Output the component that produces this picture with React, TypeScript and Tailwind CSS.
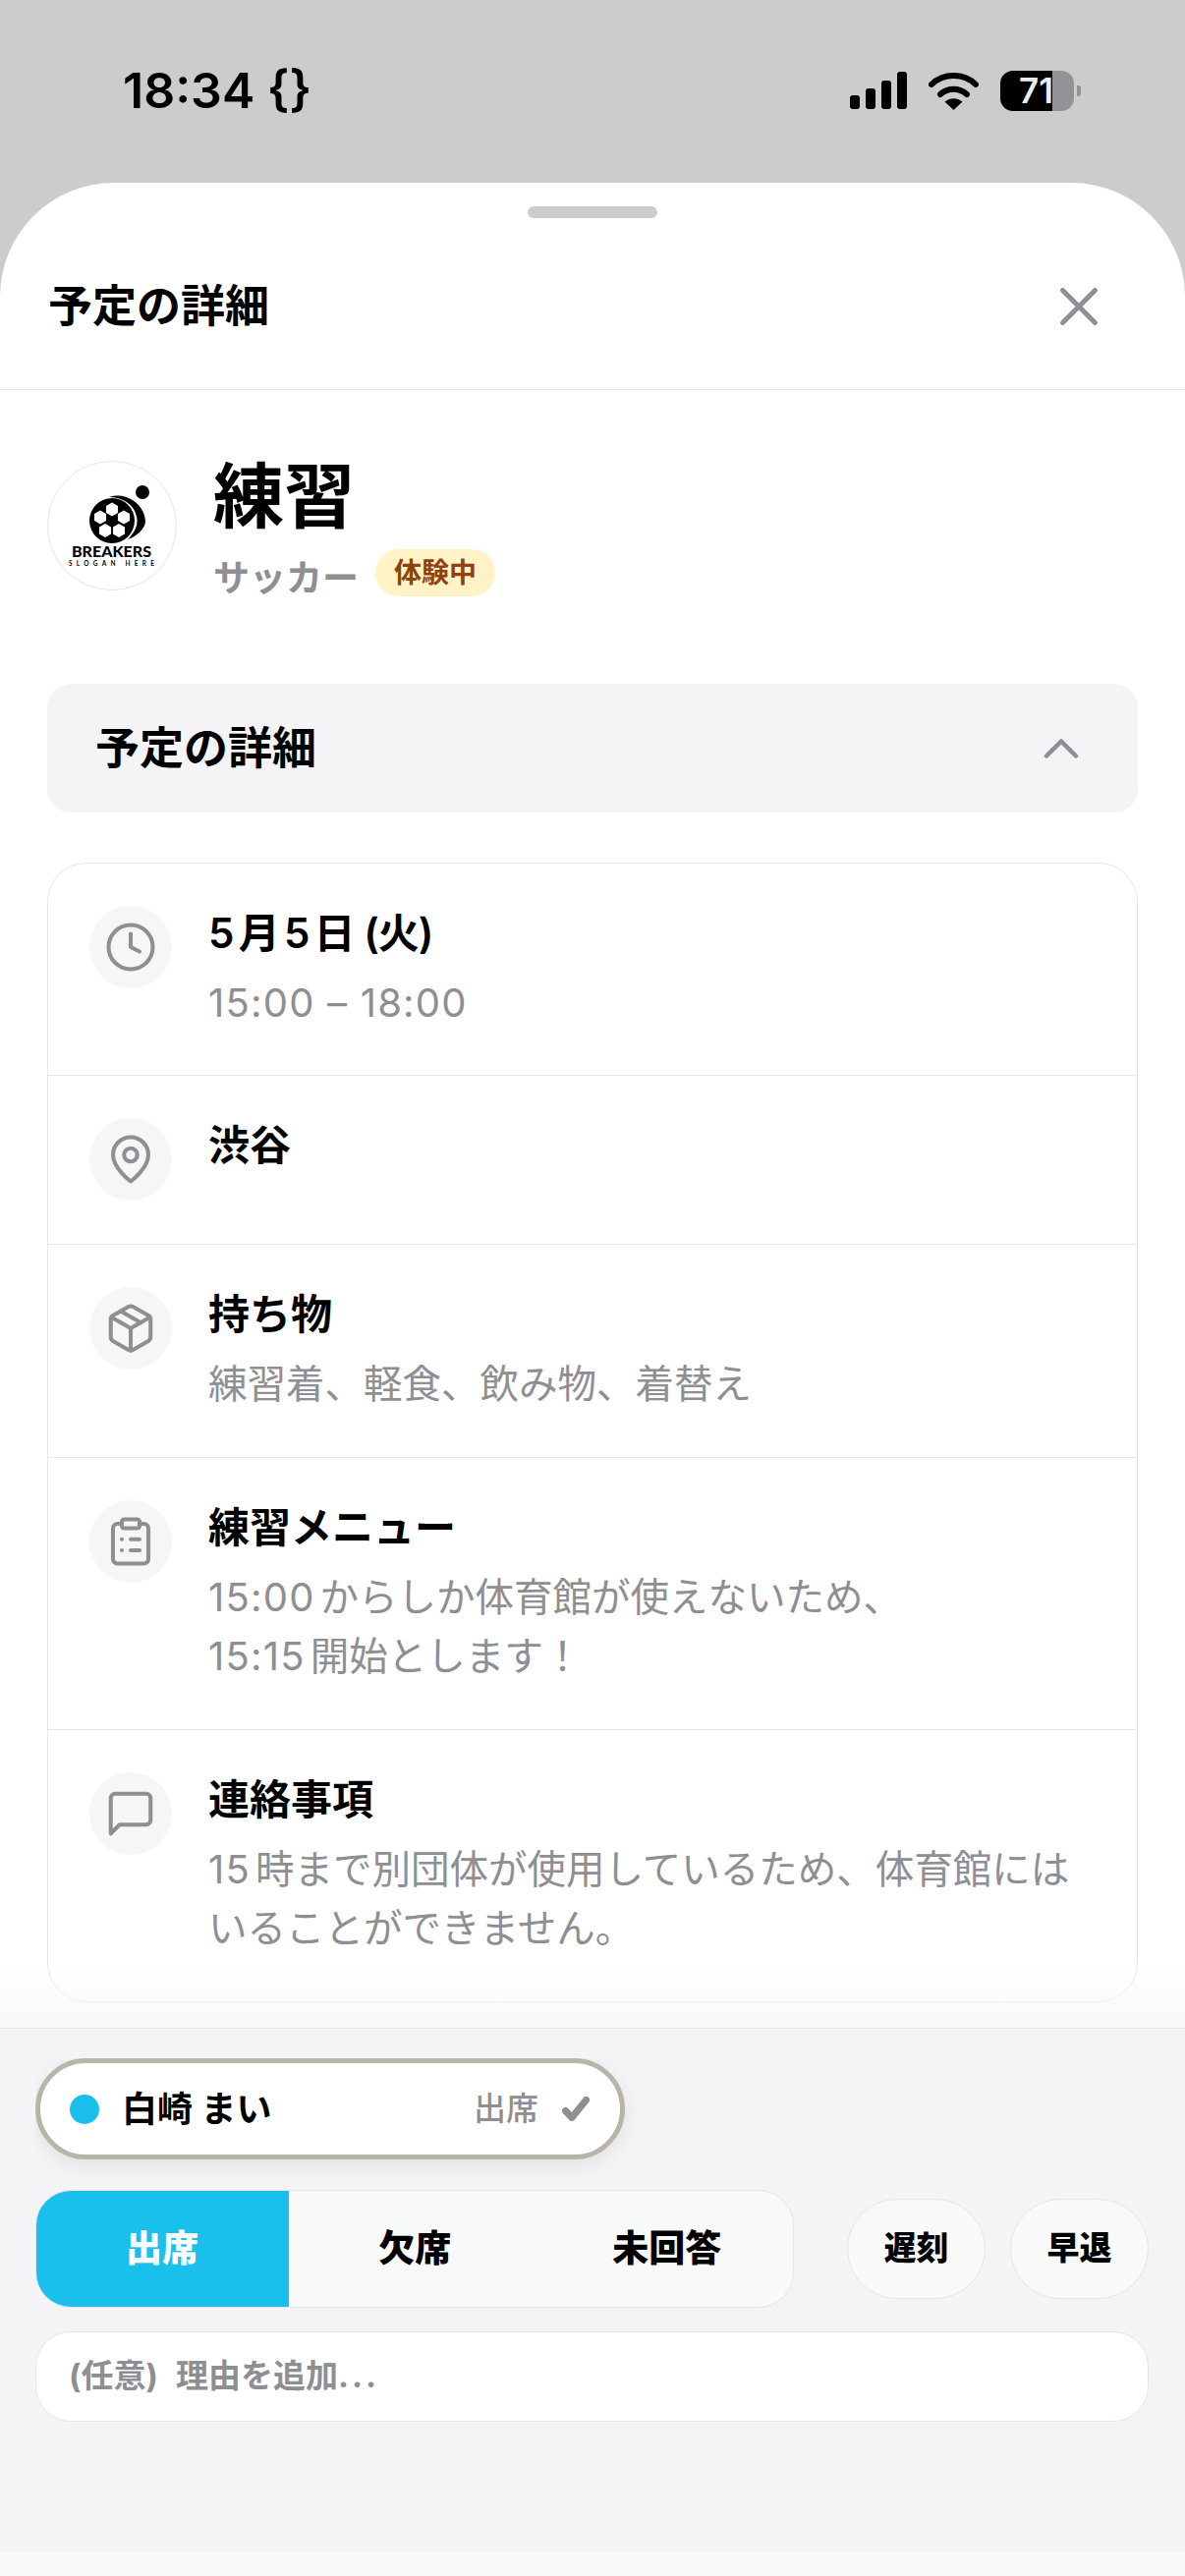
import { ChevronUp, Clock, ClipboardList, Package, X } from "lucide-react";
import type { ReactNode } from "react";

const GRAY = "#8e8e93";

const PinIcon = () => (
  <svg width={54} height={54} viewBox="0 0 24 24" fill="none" stroke={GRAY} strokeWidth={1.8} strokeLinejoin="round">
    <path d="M20 10c0 6-8 12-8 12s-8-6-8-12a8 8 0 0 1 16 0Z" />
    <circle cx={12} cy={10} r={3} />
  </svg>
);

const ChatIcon = () => (
  <svg width={54} height={54} viewBox="0 0 24 24" fill="none" stroke={GRAY} strokeWidth={1.8} strokeLinejoin="round">
    <path d="M21 15a2 2 0 0 1-2 2H7l-4 4V5a2 2 0 0 1 2-2h14a2 2 0 0 1 2 2z" />
  </svg>
);

const SignalBars = () => (
  <div className="flex items-end gap-[6px] h-[38px]">
    <div className="w-[10px] h-[14px] rounded-[3px] bg-black" />
    <div className="w-[10px] h-[21px] rounded-[3px] bg-black" />
    <div className="w-[10px] h-[29px] rounded-[3px] bg-black" />
    <div className="w-[10px] h-[38px] rounded-[3px] bg-black" />
  </div>
);

const WifiIcon = () => (
  <svg width={51} height={39} viewBox="0 0 51 39" fill="none">
    <path d="M3 13C15 1 36 1 48 13" stroke="#000" strokeWidth={6} strokeLinecap="round" />
    <path d="M12 23C20 16 31 16 39 23" stroke="#000" strokeWidth={6} strokeLinecap="round" />
    <path d="M25.5 39L16.5 30.5C22 26 29 26 34.5 30.5Z" fill="#000" />
  </svg>
);

const Battery = () => (
  <div className="flex items-center gap-[3px]">
    <div className="relative flex w-[75px] h-[41px] rounded-[13px] overflow-hidden">
      <div className="w-[53px] bg-black" />
      <div className="flex-1 bg-[#939397]" />
      <span className="absolute left-[19px] top-0 leading-[41px] text-[35px] font-semibold text-[#ececec]">71</span>
    </div>
    <div className="w-[4px] h-[11px] rounded-r-[3px] bg-[#939397]" />
  </div>
);

// white patches of the ball, around the black centre pentagon
const PATCHES = [
  [65, 48.5],
  [53, 56.5],
  [77, 56.5],
  [58, 70],
  [72, 70],
];

const hexPoints = (cx: number, cy: number, r: number) =>
  [0, 1, 2, 3, 4, 5]
    .map((i) => {
      const a = (Math.PI / 3) * i + Math.PI / 6;
      return `${cx + r * Math.cos(a)},${cy + r * Math.sin(a)}`;
    })
    .join(" ");

const TeamLogo = () => (
  <div className="w-[132px] h-[132px] shrink-0 rounded-full border border-[#e5e5ea] bg-white overflow-hidden">
    <svg width={130} height={130} viewBox="0 0 130 130">
      <circle cx={96} cy={31} r={7} fill="#000" />
      <path d="M62 36C80 30 98 44 99 60C99 68 90 76 81 79C88 72 92 64 90 56C88 44 76 36 62 36Z" fill="#000" />
      <circle cx={65} cy={60} r={23} fill="#000" />
      <clipPath id="ball-clip">
        <circle cx={65} cy={60} r={20} />
      </clipPath>
      <g clipPath="url(#ball-clip)">
        {PATCHES.map(([x, y]) => (
          <polygon key={`${x}-${y}`} points={hexPoints(x, y, 7)} fill="#fff" />
        ))}
      </g>
      <text x={24} y={97} textLength={81} lengthAdjust="spacingAndGlyphs" fontFamily="Lato, sans-serif" fontWeight={900} fontSize={15} fill="#000">
        BREAKERS
      </text>
      <text x={21} y={106} textLength={87} fontFamily="Lato, sans-serif" fontWeight={700} fontSize={6.5} fill="#000">
        SLOGAN HERE
      </text>
    </svg>
  </div>
);

// digits run a little wider than the CJK text around them
const Num = ({ children }: { children: ReactNode }) => <span className="text-[40px] tracking-[1.2px]">{children}</span>;

interface DetailRowProps {
  icon: ReactNode;
  title: ReactNode;
  lines?: ReactNode[];
  divider?: boolean;
}

const DetailRow = ({ icon, title, lines = [], divider = true }: DetailRowProps) => (
  <div className={`flex gap-[37px] pl-[42px] pt-[43px] ${divider ? "pb-[44px] border-t border-[#e5e5ea]" : "pb-[43px]"}`}>
    <div className="w-[84px] h-[84px] shrink-0 rounded-full bg-[#f6f6f6] flex items-center justify-center">{icon}</div>
    <div className="flex flex-col gap-[13px]">
      <div className="text-[42px] leading-[56px] font-semibold text-black whitespace-nowrap">{title}</div>
      {lines.length > 0 && (
        <div className="text-[39.5px] leading-[60px] text-[#8e8e93]">
          {lines.map((line, i) => (
            <div key={i} className="whitespace-nowrap">
              {line}
            </div>
          ))}
        </div>
      )}
    </div>
  </div>
);

const App = () => {
  return (
    <div
      lang="ja"
      className="flex flex-col w-[1206px] h-[2622px] overflow-hidden bg-[#cccccc] font-['Inter','Noto_Sans_CJK_JP',sans-serif] [text-autospace:normal]"
    >
      <div className="flex items-center justify-between h-[186px] shrink-0 pl-[125px] pr-[106px] pb-[2px]">
        <span className="text-[50px] leading-[60px] font-semibold text-black">18:34 {"{}"}</span>
        <div className="flex items-center gap-[22px]">
          <SignalBars />
          <WifiIcon />
          <Battery />
        </div>
      </div>

      <div className="flex flex-col flex-1 min-h-0 rounded-t-[116px] bg-white overflow-hidden">
        <div className="mx-auto mt-[24px] w-[132px] h-[12px] rounded-full bg-[#cccccc] shrink-0" />
        <div className="flex items-center justify-between mt-[6px] h-[169px] shrink-0 pl-[49px] pr-[75px] border-b border-[#e5e5ea]">
          <h1 className="text-[45px] font-semibold text-black">予定の詳細</h1>
          <X size={66} strokeWidth={1.8} color={GRAY} />
        </div>

        <div className="relative flex-1 min-h-0 px-[48px] pt-[72px]">
          <div className="flex items-start gap-[37px]">
            <TeamLogo />
            <div className="-mt-[6px]">
              <div className="text-[72px] leading-[84px] font-bold text-black">練習</div>
              <div className="flex items-start gap-[17px] mt-[12px]">
                <span className="text-[37px] leading-[60px] font-semibold text-[#8e8e93]">サッカー</span>
                <span className="flex items-center h-[48px] px-[19px] rounded-full bg-[#fef3c7] text-[28px] font-semibold text-[#92400e]">
                  体験中
                </span>
              </div>
            </div>
          </div>

          <div className="flex items-center justify-between h-[131px] mt-[77px] pl-[49px] pr-[48px] rounded-[24px] bg-[#f4f4f7]">
            <span className="text-[45px] font-semibold text-black">予定の詳細</span>
            <ChevronUp size={60} strokeWidth={1.8} color={GRAY} />
          </div>

          <div className="mt-[51px] rounded-[40px] border border-[#e5e5ea] bg-white">
            <DetailRow
              icon={<Clock size={54} strokeWidth={1.8} color={GRAY} />}
              title={<span className="tracking-[-1px]">5月5日 (火)</span>}
              lines={[<Num>15:00 – 18:00</Num>]}
              divider={false}
            />
            <DetailRow icon={<PinIcon />} title="渋谷" />
            <DetailRow icon={<Package size={54} strokeWidth={1.8} color={GRAY} />} title="持ち物" lines={["練習着、軽食、飲み物、着替え"]} />
            <DetailRow
              icon={<ClipboardList size={54} strokeWidth={1.8} color={GRAY} />}
              title="練習メニュー"
              lines={[
                <>
                  <Num>15:00</Num>からしか体育館が使えないため、
                </>,
                <>
                  <Num>15:15</Num>開始とします！
                </>,
              ]}
            />
            <DetailRow
              icon={<ChatIcon />}
              title="連絡事項"
              lines={[
                <>
                  <Num>15</Num>時まで別団体が使用しているため、体育館には
                </>,
                "いることができません。",
              ]}
            />
          </div>

          <div className="absolute inset-x-0 bottom-0 h-[70px] pointer-events-none bg-gradient-to-b from-[#f8f9f9]/0 to-[#f8f9f9]" />
        </div>

        <div className="shrink-0 h-[534px] border-t border-[#e5e5ea] bg-[#f4f4f7] pt-[30px] pl-[36px] pr-[37px]">
          <div className="w-[632px] h-[128px] overflow-hidden">
            <div className="flex items-center w-[600px] h-[103px] pl-[30px] pr-[31px] rounded-full border-[5px] border-[#b8b4aa] bg-white shadow-[0_6px_20px_rgba(0,0,0,0.08)]">
              <div className="w-[30px] h-[30px] rounded-full bg-[#19c0ec]" />
              <span className="ml-[23px] text-[36px] font-bold text-black">白崎 まい</span>
              <span className="ml-auto text-[33px] font-medium text-[#8e8e93]">出席</span>
              <svg className="ml-[24px]" width={28} height={25} viewBox="0 0 28 25" fill="none">
                <path d="M3.5 14.5L10 21.5L24.5 3.5" stroke={GRAY} strokeWidth={7} strokeLinecap="round" strokeLinejoin="round" />
              </svg>
            </div>
          </div>

          <div className="flex items-center justify-between mt-[6px]">
            <div className="flex w-[772px] h-[120px] rounded-[36px] border border-[#e5e5ea] bg-[#f8f9f9] overflow-hidden">
              <div className="w-[258px] shrink-0 -my-px -ml-px flex items-center justify-center bg-[#19c0ec] text-[37px] font-black text-white">出席</div>
              <div className="flex-1 flex items-center justify-center text-[37px] font-black text-black">欠席</div>
              <div className="flex-1 flex items-center justify-center text-[37px] font-black text-black">未回答</div>
            </div>
            <div className="flex gap-[25px]">
              <div className="flex items-center justify-center w-[141px] h-[102px] rounded-full border border-[#e5e5ea] bg-[#f8f9f9] text-[33px] font-black text-black">遅刻</div>
              <div className="flex items-center justify-center w-[141px] h-[102px] rounded-full border border-[#e5e5ea] bg-[#f8f9f9] text-[33px] font-black text-black">早退</div>
            </div>
          </div>

          <div className="flex items-center h-[92px] mt-[24px] px-[33px] rounded-[36px] border border-[#e5e5ea] bg-white text-[33px] font-bold text-[#8e8e93]">
            <span>(任意)</span>
            <span className="ml-[18px]">理由を追加</span>
            <span className="tracking-[3px]">...</span>
          </div>
        </div>

        <div className="shrink-0 h-[24px] bg-[#fafafa]" />
      </div>
    </div>
  );
};

export default App;
